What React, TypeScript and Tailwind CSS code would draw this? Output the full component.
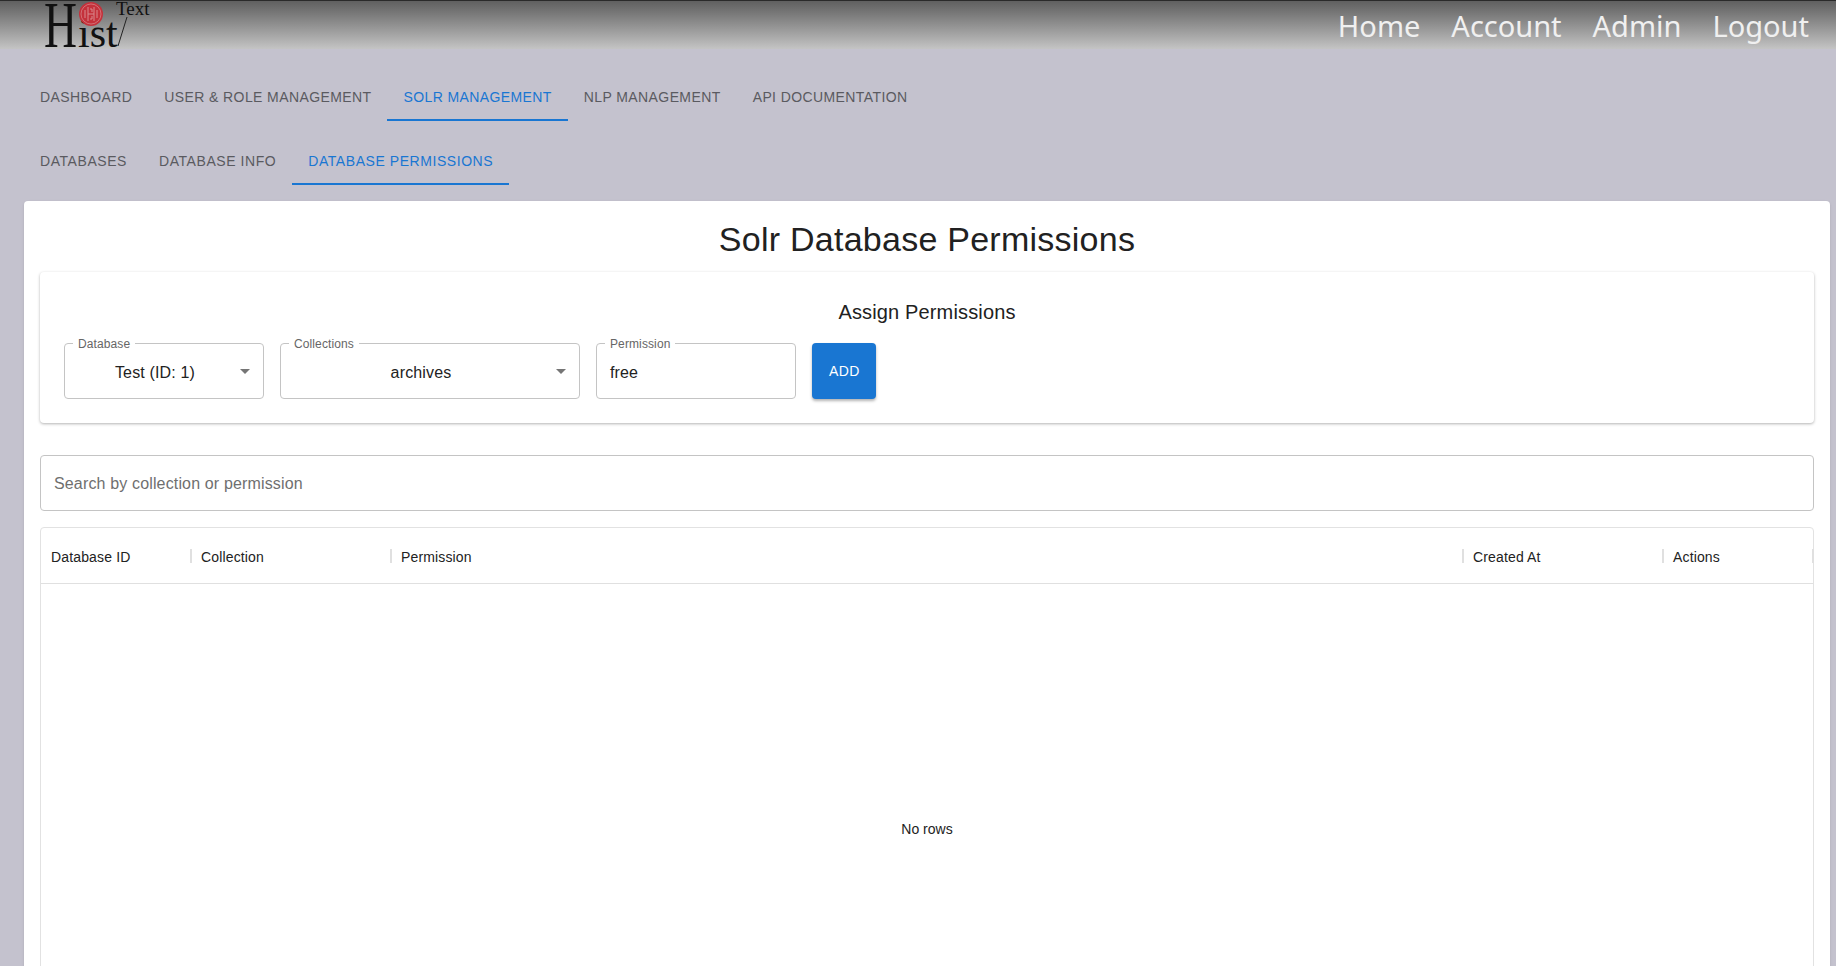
import React from 'react';

const mainTabs = ['Dashboard', 'User & Role Management', 'Solr Management', 'NLP Management', 'API Documentation'];
const subTabs = ['Databases', 'Database Info', 'Database Permissions'];
const navLinks = ['Home', 'Account', 'Admin', 'Logout'];
const columns = [
  { name: 'Database ID', className: 'w-[150px]' },
  { name: 'Collection', className: 'w-[200px]' },
  { name: 'Permission', className: 'flex-1' },
  { name: 'Created At', className: 'w-[200px]' },
  { name: 'Actions', className: 'w-[150px]' },
];

function Logo() {
  return (
    <svg width="116" height="50" viewBox="0 0 116 50" className="ml-[44px] -mt-px shrink-0 self-start overflow-visible">
      <text x="0" y="47" fontFamily="Liberation Serif, serif" fontSize="66" fill="#111" textLength="33" lengthAdjust="spacingAndGlyphs">H</text>
      <text x="34" y="47" fontFamily="Liberation Serif, serif" fontSize="42" fill="#111">ist</text>
      <text x="72" y="15" fontFamily="Liberation Serif, serif" fontSize="19" fill="#111">Text</text>
      <line x1="83" y1="17" x2="74" y2="46" stroke="#222" strokeWidth="1" />
      <circle cx="47" cy="14" r="12" fill="#c4313b" />
      <circle cx="47" cy="14" r="10" fill="none" stroke="#d98a8e" strokeWidth="0.7" />
      <g fill="none" stroke="#d98a8e" strokeWidth="1">
        <path d="M41 10v8M44 7v14M50 7v14M53 10v8M44 14h6M46 9h2v3M46 19h2v-3" />
      </g>
    </svg>
  );
}

function TabRow({ tabs, active, tracking }: { tabs: string[]; active: string; tracking: string }) {
  return (
    <div className="flex h-12 pl-6">
      {tabs.map((tab) => (
        <div
          key={tab}
          className={`flex h-12 items-center border-b-2 px-4 pt-[2px] text-sm font-medium uppercase ${tracking} ${
            tab === active ? 'border-[#1976d2] text-[#1976d2]' : 'border-transparent text-[#5a5a60]'
          }`}
        >
          {tab}
        </div>
      ))}
    </div>
  );
}

function Field({ label, value, width, select, center }: { label: string; value: string; width: string; select?: boolean; center?: boolean }) {
  return (
    <div className={`relative flex h-14 items-center rounded border border-[#c4c4c4] px-[13px] pt-[3px] ${width}`}>
      <span className="absolute -top-[7px] left-[8px] bg-white px-[5px] text-xs leading-[14px] tracking-[0.11px] text-[#666]">{label}</span>
      <span className={`flex-1 text-base tracking-[0.15px] text-[#222] ${center ? 'pr-[18px] text-center' : ''}`}>{value}</span>
      {select && (
        <svg width="24" height="24" viewBox="0 0 24 24" className="absolute right-[6px] top-[15px]" fill="#757575">
          <path d="M7 10l5 5 5-5z" />
        </svg>
      )}
    </div>
  );
}

export default function App() {
  return (
    <div className="h-screen overflow-hidden bg-[#c4c2ce] font-['Liberation_Sans',Arial,sans-serif]">
      <header className="flex h-[49px] items-center justify-between border-t border-[#2a2a2a] bg-gradient-to-b from-[#606060] to-[#c4c4c4]">
        <Logo />
        <nav className="mr-[27px] flex gap-[31px] pt-px font-['Noto_Sans',sans-serif] text-[29px] text-[#f0f0f0]">
          {navLinks.map((link) => (
            <span key={link}>{link}</span>
          ))}
        </nav>
      </header>

      <div className="pt-6">
        <TabRow tabs={mainTabs} active="Solr Management" tracking="tracking-[0.4px]" />
      </div>
      <div className="pt-4">
        <TabRow tabs={subTabs} active="Database Permissions" tracking="tracking-[0.56px]" />
      </div>

      <main className="ml-6 mr-[6px] mt-4 rounded bg-white px-4 pt-[15px] shadow-sm">
        <h1 className="text-center text-[34px] leading-[46px] tracking-[0.25px] text-[#212121]">Solr Database Permissions</h1>

        <section className="mt-[10px] rounded bg-white px-6 pb-6 pt-6 shadow-[0_1px_3px_rgba(0,0,0,0.3)]">
          <h2 className="mb-4 pt-px text-center text-xl leading-[30px] tracking-[0.15px] text-[#212121]">Assign Permissions</h2>
          <div className="flex gap-4">
            <Field label="Database" value="Test (ID: 1)" width="w-[200px]" select center />
            <Field label="Collections" value="archives" width="w-[300px]" select center />
            <Field label="Permission" value="free" width="w-[200px]" />
            <button className="h-14 w-16 rounded bg-[#1976d2] pl-px text-sm font-medium uppercase tracking-[0.4px] text-white shadow-[0_2px_3px_rgba(0,0,0,0.3)]">
              Add
            </button>
          </div>
        </section>

        <div className="mt-8 flex h-14 items-center rounded border border-[#c4c4c4] px-[13px] pt-px text-base tracking-[0.15px] text-[#6f6f6f]">
          Search by collection or permission
        </div>

        <div className="mt-4 h-[546px] rounded border border-[#e2e2e2]">
          <div className="flex h-14 border-b border-[#e0e0e0] text-sm tracking-[0.15px] text-[#222]">
            {columns.map((col) => (
              <div key={col.name} className={`relative flex items-center px-[10px] pt-[2px] ${col.className}`}>
                {col.name}
                <span className="absolute right-[-1px] top-[21px] h-[14px] w-[2px] bg-[#e0e0e0]" />
              </div>
            ))}
          </div>
          <div className="flex h-[490px] items-center justify-center text-sm text-[#222]">No rows</div>
        </div>
      </main>
    </div>
  );
}
